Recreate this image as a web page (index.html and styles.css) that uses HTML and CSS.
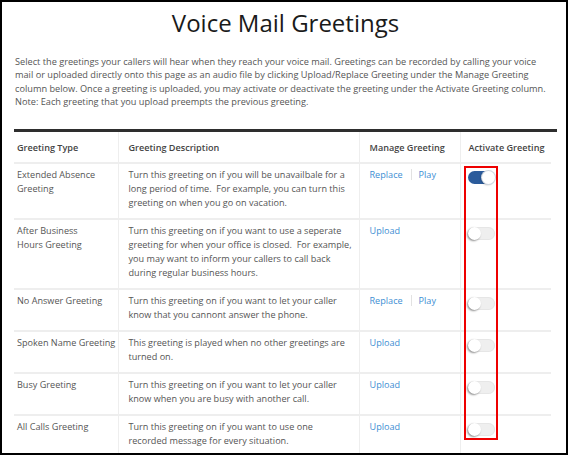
FILE: index.html
```html
<!DOCTYPE html>
<html>
<head>
<meta charset="utf-8">
<link rel="stylesheet" href="styles.css">
</head>
<body>
<div class="frame">
  <h1 class="title">Voice Mail Greetings</h1>
  <p class="intro">Select the greetings your callers will hear when they reach your voice mail. Greetings can be recorded by calling your voice mail or uploaded directly onto this page as an audio file by clicking Upload/Replace Greeting under the Manage Greeting column below. Once a greeting is uploaded, you may activate or deactivate the greeting under the Activate Greeting column. Note: Each greeting that you upload preempts the previous greeting.</p>
  <div class="table-wrap">
    <table class="greetings">
      <thead>
        <tr>
          <th class="c-type">Greeting Type</th>
          <th class="c-desc">Greeting Description</th>
          <th class="c-manage">Manage Greeting</th>
          <th class="c-active">Activate Greeting</th>
        </tr>
      </thead>
      <tbody>
        <tr>
          <td class="c-type">Extended Absence Greeting</td>
          <td class="c-desc">Turn this greeting on if you will be unavailbale for a long period of time.&nbsp; For example, you can turn this greeting on when you go on vacation.</td>
          <td class="c-manage"><a class="link">Replace</a><span class="sep"></span><a class="link">Play</a></td>
          <td class="c-active"><span class="toggle on"><span class="knob"></span></span></td>
        </tr>
        <tr>
          <td class="c-type">After Business Hours&nbsp;Greeting</td>
          <td class="c-desc">Turn this greeting on if you want to use a seperate greeting for when your office is closed.&nbsp; For example, you may want to inform your callers to call back during regular business hours.</td>
          <td class="c-manage"><a class="link">Upload</a></td>
          <td class="c-active"><span class="toggle"><span class="knob"></span></span></td>
        </tr>
        <tr>
          <td class="c-type">No Answer Greeting</td>
          <td class="c-desc">Turn this greeting on if you want to let your caller know that you cannont answer the phone.</td>
          <td class="c-manage"><a class="link">Replace</a><span class="sep"></span><a class="link">Play</a></td>
          <td class="c-active"><span class="toggle"><span class="knob"></span></span></td>
        </tr>
        <tr>
          <td class="c-type">Spoken Name Greeting</td>
          <td class="c-desc">This greeting is played when no other greetings are turned on.</td>
          <td class="c-manage"><a class="link">Upload</a></td>
          <td class="c-active"><span class="toggle"><span class="knob"></span></span></td>
        </tr>
        <tr>
          <td class="c-type">Busy Greeting</td>
          <td class="c-desc">Turn this greeting on if you want to let your caller know when you are busy with another call.</td>
          <td class="c-manage"><a class="link">Upload</a></td>
          <td class="c-active"><span class="toggle"><span class="knob"></span></span></td>
        </tr>
        <tr>
          <td class="c-type">All Calls Greeting</td>
          <td class="c-desc">Turn this greeting on if you want to use one recorded&nbsp;message for every situation.</td>
          <td class="c-manage"><a class="link">Upload</a></td>
          <td class="c-active"><span class="toggle"><span class="knob"></span></span></td>
        </tr>
      </tbody>
    </table>
  </div>
  <div class="highlight"></div>
</div>
</body>
</html>
```

FILE: styles.css
```css
* { box-sizing: border-box; }
html, body { margin: 0; padding: 0; background: #fff; }
body { font-family: "Open Sans", "Noto Sans", sans-serif; color: #555; }

.frame {
  position: relative;
  width: 568px;
  height: 455px;
  border: 2px solid #000;
  overflow: hidden;
  padding: 0 9px 0 12px;
}

.title {
  margin: 4px 0 0;
  font-size: 24px;
  line-height: 34px;
  font-weight: 400;
  color: #1a1a1a;
  text-align: center;
}

.intro {
  margin: 15px 10px 0 1px;
  font-size: 9.2px;
  line-height: 13.4px;
  color: #555;
}

.table-wrap {
  margin-top: 20px;
  border-top: 3px solid #2e2e2e;
}

.greetings {
  width: 537px;
  border-collapse: collapse;
  table-layout: fixed;
  font-size: 9.1px;
  line-height: 14px;
}

.greetings th,
.greetings td {
  text-align: left;
  vertical-align: top;
  padding: 4px 4px 8px 10px;
  border-bottom: 2px solid #eeeeee;
  border-left: 1px solid #eeeeee;
}

.greetings th {
  padding-top: 9px;
  padding-bottom: 7px;
  font-weight: 600;
  color: #444;
}

.greetings .c-type { width: 104px; padding-left: 3px; padding-right: 1px; border-left: none; }
.greetings .c-desc { width: 241px; }
.greetings .c-manage { width: 101px; }
.greetings .c-active { width: 91px; padding-left: 7px; }
.greetings th.c-active { padding-left: 8px; }

.row-short td { padding-bottom: 6px; }

.link {
  color: #3d8ed3;
  text-decoration: none;
}

.sep {
  display: inline-block;
  width: 1px;
  height: 11px;
  background: #e2e2e2;
  margin: 0 7px 0 8px;
  vertical-align: -2px;
}

.toggle {
  position: relative;
  display: block;
  width: 27px;
  height: 13px;
  margin-top: 3px;
  border-radius: 7px;
  background: #efefef;
  box-shadow: inset 0 0 0 1px #e6e6e6;
}

.toggle .knob {
  position: absolute;
  top: 0;
  left: 0;
  width: 13px;
  height: 13px;
  border-radius: 50%;
  background: #fff;
  box-shadow: -1px 1px 2px rgba(0,0,0,0.45);
}

.toggle.on {
  background: #2b5b9b;
  box-shadow: none;
}

.toggle.on .knob {
  left: 14px;
  box-shadow: 0 0 0 1px #cfd6e0, -1px 1px 2px rgba(0,0,0,0.3);
}

.highlight {
  position: absolute;
  left: 462px;
  top: 164px;
  width: 34px;
  height: 274px;
  border: 2px solid #ee0000;
  pointer-events: none;
}
```
